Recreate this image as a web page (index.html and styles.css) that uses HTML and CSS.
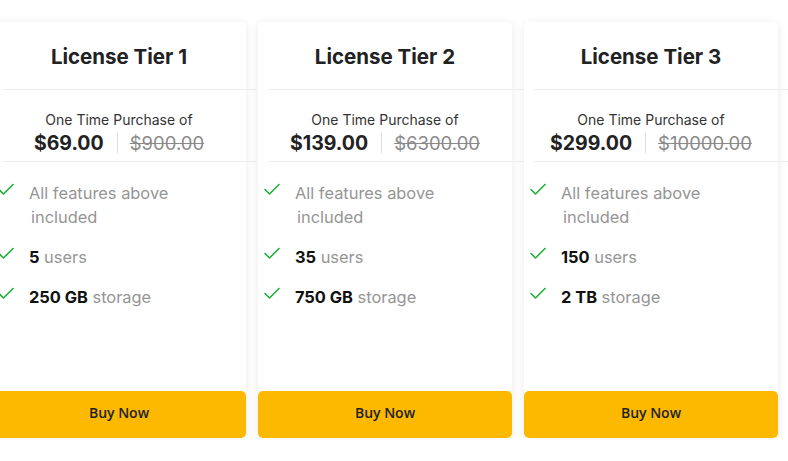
FILE: index.html
```html
<!DOCTYPE html>
<html>
<head>
<meta charset="utf-8">
<link rel="stylesheet" href="styles.css">
</head>
<body>
<div class="tiers">
  <div class="card">
    <div class="body">
      <h2 class="title">License Tier 1</h2>
      <div class="rule"></div>
      <div class="price">
        <div class="label">One Time Purchase of</div>
        <div class="amounts"><span class="now">$69.00</span><span class="sep"></span><span class="was">$900.00</span></div>
      </div>
      <div class="rule"></div>
      <ul class="features">
        <li><svg class="check" viewBox="0 0 16 13"><path d="M1 6.5 L5.5 11 L15 1.5"/></svg><span class="ft">All features above<br><span class="indent">included</span></span></li>
        <li><svg class="check" viewBox="0 0 16 13"><path d="M1 6.5 L5.5 11 L15 1.5"/></svg><span class="ft"><b>5</b> users</span></li>
        <li><svg class="check" viewBox="0 0 16 13"><path d="M1 6.5 L5.5 11 L15 1.5"/></svg><span class="ft"><b>250 GB</b> storage</span></li>
      </ul>
    </div>
    <button class="buy">Buy Now</button>
  </div>
  <div class="card">
    <div class="body">
      <h2 class="title">License Tier 2</h2>
      <div class="rule"></div>
      <div class="price">
        <div class="label">One Time Purchase of</div>
        <div class="amounts"><span class="now">$139.00</span><span class="sep"></span><span class="was">$6300.00</span></div>
      </div>
      <div class="rule"></div>
      <ul class="features">
        <li><svg class="check" viewBox="0 0 16 13"><path d="M1 6.5 L5.5 11 L15 1.5"/></svg><span class="ft">All features above<br><span class="indent">included</span></span></li>
        <li><svg class="check" viewBox="0 0 16 13"><path d="M1 6.5 L5.5 11 L15 1.5"/></svg><span class="ft"><b>35</b> users</span></li>
        <li><svg class="check" viewBox="0 0 16 13"><path d="M1 6.5 L5.5 11 L15 1.5"/></svg><span class="ft"><b>750 GB</b> storage</span></li>
      </ul>
    </div>
    <button class="buy">Buy Now</button>
  </div>
  <div class="card">
    <div class="body">
      <h2 class="title">License Tier 3</h2>
      <div class="rule"></div>
      <div class="price">
        <div class="label">One Time Purchase of</div>
        <div class="amounts"><span class="now">$299.00</span><span class="sep"></span><span class="was">$10000.00</span></div>
      </div>
      <div class="rule"></div>
      <ul class="features">
        <li><svg class="check" viewBox="0 0 16 13"><path d="M1 6.5 L5.5 11 L15 1.5"/></svg><span class="ft">All features above<br><span class="indent">included</span></span></li>
        <li><svg class="check" viewBox="0 0 16 13"><path d="M1 6.5 L5.5 11 L15 1.5"/></svg><span class="ft"><b>150</b> users</span></li>
        <li><svg class="check" viewBox="0 0 16 13"><path d="M1 6.5 L5.5 11 L15 1.5"/></svg><span class="ft"><b>2 TB</b> storage</span></li>
      </ul>
    </div>
    <button class="buy">Buy Now</button>
  </div>
</div>
</body>
</html>
```

FILE: styles.css
```css
html, body {
  margin: 0;
  padding: 0;
  background: #ffffff;
  font-family: Inter, "Open Sans", sans-serif;
  overflow: hidden;
}

.tiers {
  display: flex;
  gap: 12px;
  margin-left: -8px;
  padding-top: 22px;
}

.card {
  flex: 0 0 254px;
  width: 254px;
  height: 416px;
  display: flex;
  flex-direction: column;
  background: #ffffff;
  border-radius: 4px;
  box-shadow: 0 2px 10px rgba(0, 0, 0, 0.09);
}

.body {
  flex: 1;
}

.title {
  margin: 0;
  height: 67px;
  display: flex;
  align-items: center;
  justify-content: center;
  font-size: 20.5px;
  font-weight: 700;
  color: #222222;
  padding-top: 1px;
  box-sizing: border-box;
}

.rule {
  height: 1px;
  background: #ececec;
  margin-left: 10px;
  margin-right: -10px;
}

.price {
  height: 71px;
  display: flex;
  flex-direction: column;
  align-items: center;
  justify-content: center;
  padding-top: 13px;
  box-sizing: border-box;
}

.label {
  font-size: 14px;
  color: #333333;
  line-height: 18px;
}

.amounts {
  display: flex;
  align-items: center;
  margin-top: 3px;
  line-height: 22px;
}

.now {
  font-size: 19.5px;
  font-weight: 700;
  color: #222222;
}

.sep {
  width: 1px;
  height: 20px;
  background: #dddddd;
  margin: 0 12px 0 13px;
}

.was {
  font-size: 18.5px;
  color: #8a8a8a;
  text-decoration: line-through;
}

.features {
  list-style: none;
  margin: 0;
  padding: 19px 0 0 6px;
}

.features li {
  display: flex;
  align-items: flex-start;
  margin-bottom: 16px;
  font-size: 16.4px;
  line-height: 24px;
  color: #959595;
}

.indent {
  margin-left: 2px;
}

.check {
  width: 16px;
  height: 13px;
  margin-top: 2px;
  margin-right: 15px;
  flex: 0 0 16px;
}

.check path {
  fill: none;
  stroke: #1fae3c;
  stroke-width: 1.6;
  stroke-linecap: round;
  stroke-linejoin: round;
}

.ft b {
  color: #111111;
  font-weight: 700;
}

.buy {
  height: 47px;
  border: none;
  border-radius: 5px;
  background: #fdb900;
  color: #222222;
  font-family: "Open Sans", sans-serif;
  font-size: 14px;
  font-weight: 600;
  padding: 0 0 5px 0;
  cursor: pointer;
}
```
